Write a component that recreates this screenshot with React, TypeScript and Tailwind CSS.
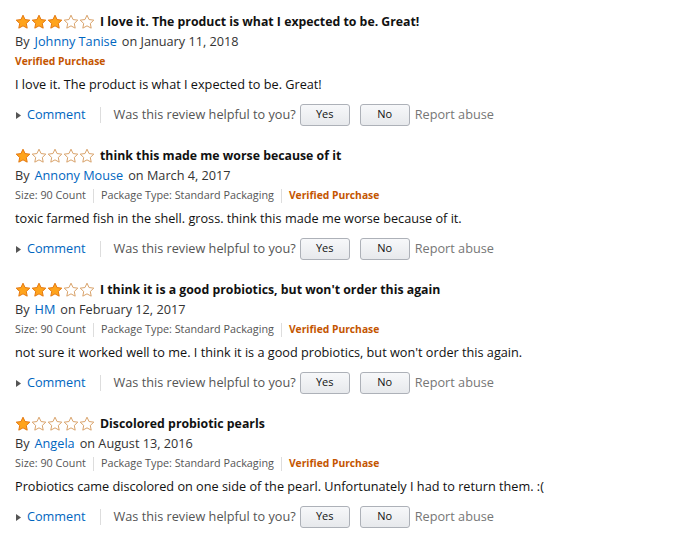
import React from "react";

const FONT = { fontFamily: '"Open Sans", "Noto Sans", Arial, sans-serif' };

function Star({ filled }: { filled: boolean }) {
  return (
    <svg width="16" height="16" viewBox="0 0 16 16" className="block">
      <path
        d="M8 1.2l2.05 4.35 4.75.6-3.5 3.3.9 4.7L8 11.85 3.8 14.15l.9-4.7-3.5-3.3 4.75-.6z"
        fill={filled ? "#FFA41C" : "#ffffff"}
        stroke={filled ? "#E47911" : "#D9A36B"}
        strokeWidth="1"
        strokeLinejoin="round"
      />
    </svg>
  );
}

type Review = {
  stars: number;
  title: string;
  author: string;
  date: string;
  meta: boolean;
  body: string;
};

const reviews: Review[] = [
  {
    stars: 3,
    title: "I love it. The product is what I expected to be. Great!",
    author: "Johnny Tanise",
    date: "January 11, 2018",
    meta: false,
    body: "I love it. The product is what I expected to be. Great!",
  },
  {
    stars: 1,
    title: "think this made me worse because of it",
    author: "Annony Mouse",
    date: "March 4, 2017",
    meta: true,
    body: "toxic farmed fish in the shell. gross. think this made me worse because of it.",
  },
  {
    stars: 3,
    title: "I think it is a good probiotics, but won't order this again",
    author: "HM",
    date: "February 12, 2017",
    meta: true,
    body: "not sure it worked well to me. I think it is a good probiotics, but won't order this again.",
  },
  {
    stars: 1,
    title: "Discolored probiotic pearls",
    author: "Angela",
    date: "August 13, 2016",
    meta: true,
    body: "Probiotics came discolored on one side of the pearl. Unfortunately I had to return them. :(",
  },
];

function Btn({ label }: { label: string }) {
  return (
    <div className="h-[22px] w-[50px] rounded-[3px] border border-[#adb1b8] bg-gradient-to-b from-[#f7f8fa] to-[#e7e9ec] flex items-center justify-center text-[11px] text-[#111] pb-px">
      {label}
    </div>
  );
}

function ReviewBlock({ r }: { r: Review }) {
  return (
    <div className="flex flex-col">
      <div className="h-[20px] flex items-center">
        <div className="flex">
          {[0, 1, 2, 3, 4].map((i) => (
            <Star key={i} filled={i < r.stars} />
          ))}
        </div>
        <span className="ml-[5px] font-bold text-[12.3px] text-[#111] leading-none">{r.title}</span>
      </div>
      <div className="h-[20px] flex items-center text-[12.7px] text-[#333]">
        <span>By</span>
        <span className="ml-[5px] text-[#0066c0]">{r.author}</span>
        <span className="ml-[5px]">on {r.date}</span>
      </div>
      <div className="h-[19px] flex items-center text-[10.8px]">
        {r.meta ? (
          <>
            <span className="text-[#555]">Size: 90 Count</span>
            <span className="mx-[7px] h-[14px] w-px bg-[#ddd]" />
            <span className="text-[#555]">Package Type: Standard Packaging</span>
            <span className="mx-[7px] h-[14px] w-px bg-[#ddd]" />
            <span className="font-bold text-[#c45500] text-[10.3px]">Verified Purchase</span>
          </>
        ) : (
          <span className="font-bold text-[#c45500] text-[10.3px]">Verified Purchase</span>
        )}
      </div>
      <div className="mt-[4px] h-[20px] flex items-center text-[12.7px] text-[#111]">{r.body}</div>
      <div className="mt-[7px] h-[26px] flex items-center text-[12.7px]">
        <svg width="5" height="7" viewBox="0 0 5 7" className="ml-[1px]">
          <path d="M0 0L5 3.5L0 7z" fill="#555" />
        </svg>
        <span className="ml-[6px] text-[#0066c0]">Comment</span>
        <span className="ml-[14px] h-[16px] w-px bg-[#ddd]" />
        <span className="ml-[13px] text-[#555]">Was this review helpful to you?</span>
        <div className="ml-[4px]">
          <Btn label="Yes" />
        </div>
        <div className="ml-[10px]">
          <Btn label="No" />
        </div>
        <span className="ml-[5px] text-[#767676]">Report abuse</span>
      </div>
    </div>
  );
}

export default function App() {
  return (
    <div className="w-[696px] h-[534px] bg-white pl-[15px] pt-[12px] flex flex-col gap-[18px]" style={FONT}>
      {reviews.map((r, i) => (
        <ReviewBlock key={i} r={r} />
      ))}
    </div>
  );
}
